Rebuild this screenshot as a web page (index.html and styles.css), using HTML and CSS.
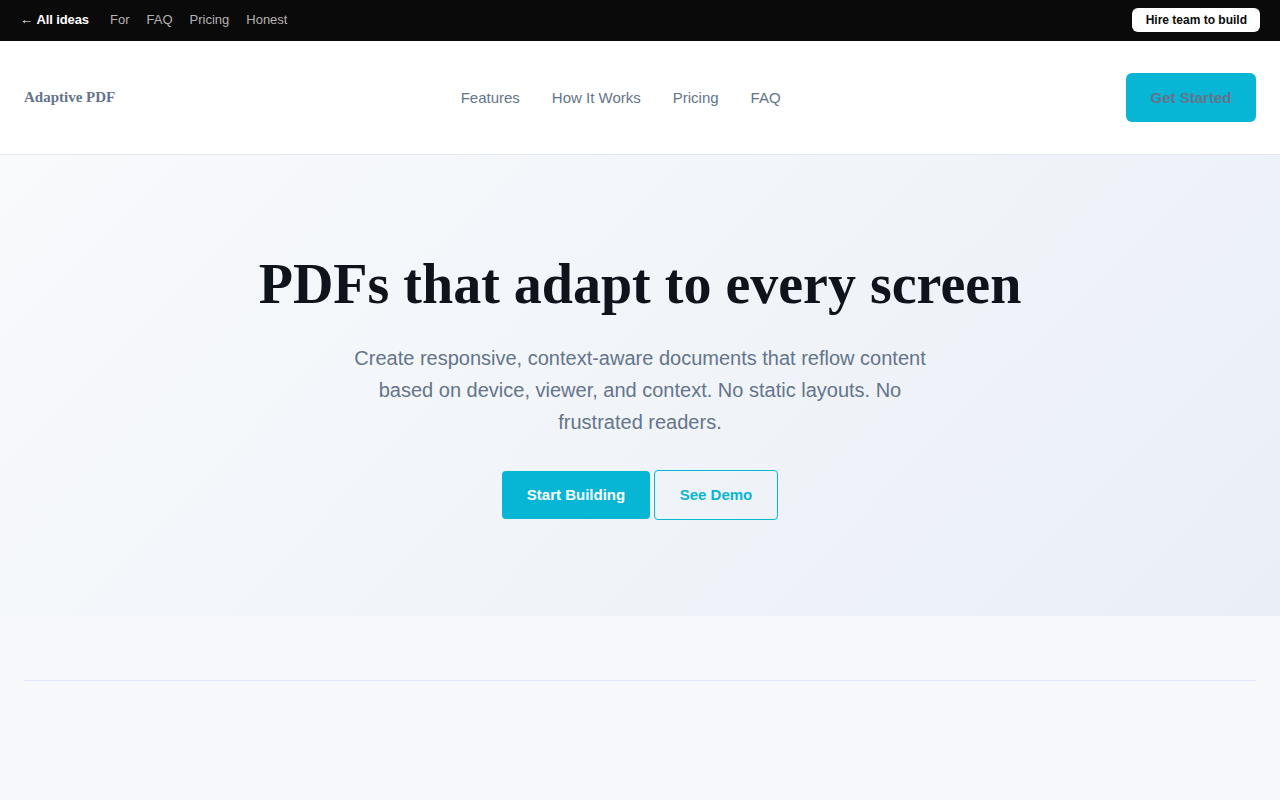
FILE: index.html
```html
<!DOCTYPE html>
<html lang="en">
  <head>
    <meta charset="UTF-8">
    <meta name="viewport" content="width=device-width, initial-scale=1.0">
    <title>Adaptive PDF</title>
    <link rel="stylesheet" href="styles.css">
  </head>
  <body>
    <div class="topbar">
      <div class="topbar-links">
        <a class="back" href="#">&larr; <b>All ideas</b></a>
        <a href="#">For</a>
        <a href="#">FAQ</a>
        <a href="#">Pricing</a>
        <a href="#">Honest</a>
      </div>
      <a class="hire" href="#">Hire team to build</a>
    </div>

    <header class="header">
      <div class="logo">Adaptive PDF</div>
      <nav class="nav">
        <a href="#">Features</a>
        <a href="#">How It Works</a>
        <a href="#">Pricing</a>
        <a href="#">FAQ</a>
      </nav>
      <a class="get-started" href="#">Get Started</a>
    </header>

    <section class="hero">
      <h1>PDFs that adapt to every screen</h1>
      <p>Create responsive, context-aware documents that reflow content based on device, viewer, and context. No static layouts. No frustrated readers.</p>
      <div class="hero-buttons">
        <a class="btn btn-primary" href="#">Start Building</a>
        <a class="btn btn-outline" href="#">See Demo</a>
      </div>
    </section>

    <div class="divider"></div>
  </body>
</html>
```

FILE: styles.css
```css
body {
  margin: 0;
  background: #f7f8fc;
  font-family: 'Liberation Sans', Arial, sans-serif;
  min-height: 100vh;
}
a {
  text-decoration: none;
}
.topbar {
  height: 41px;
  background: #0a0a0a;
  display: flex;
  align-items: center;
  justify-content: space-between;
  padding: 0 20px 2px 20px;
  box-sizing: border-box;
}
.topbar-links {
  display: flex;
  align-items: center;
  gap: 17px;
  font-size: 13px;
}
.topbar-links a {
  color: #b3b3b3;
}
.topbar-links a.back {
  color: #fff;
  margin-right: 4px;
  letter-spacing: -0.1px;
}
.hire {
  background: #fff;
  color: #0a0a0a;
  font-size: 12px;
  font-weight: bold;
  padding: 5px 13px 5px 14px;
  border-radius: 6px;
  line-height: 14px;
}
.header {
  height: 114px;
  background: #fff;
  border-bottom: 1px solid #e2e8f0;
  display: flex;
  align-items: center;
  justify-content: space-between;
  padding: 0 24px;
  box-sizing: border-box;
}
.logo {
  font-family: 'Liberation Serif', 'Times New Roman', serif;
  font-weight: bold;
  font-size: 15px;
  color: #64748b;
}
.nav {
  display: flex;
  gap: 32px;
  font-size: 15px;
}
.nav a {
  color: #64748b;
}
.get-started {
  background: #06b6d4;
  color: #64748b;
  font-size: 15px;
  font-weight: bold;
  width: 130px;
  height: 49px;
  border-radius: 6px;
  display: flex;
  align-items: center;
  justify-content: center;
}
.hero {
  background: linear-gradient(135deg, #f8fafc 0%, #eaeff7 100%);
  padding: 96px 24px;
  text-align: center;
}
.hero h1 {
  font-family: 'Liberation Serif', 'Times New Roman', serif;
  font-size: 56px;
  line-height: 67px;
  color: #0f141c;
  margin: 0 0 24px 0;
}
.hero p {
  max-width: 600px;
  margin: 0 auto 33px auto;
  font-size: 20px;
  line-height: 32px;
  color: #64748b;
}
.hero-buttons {
  display: flex;
  justify-content: center;
  gap: 4px;
}
.btn {
  height: 48px;
  box-sizing: border-box;
  display: flex;
  align-items: center;
  justify-content: center;
  padding-bottom: 2px;
  font-size: 15px;
  font-weight: bold;
  border-radius: 4px;
}
.btn-primary {
  width: 148px;
  background: #06b6d4;
  color: #fff;
}
.btn-outline {
  width: 124px;
  border: 1px solid #06b6d4;
  color: #06b6d4;
  height: 50px;
  margin-top: -1px;
}
.divider {
  margin: 64px 24px 0 24px;
  border-top: 1px solid #e0e7ff;
}
```
